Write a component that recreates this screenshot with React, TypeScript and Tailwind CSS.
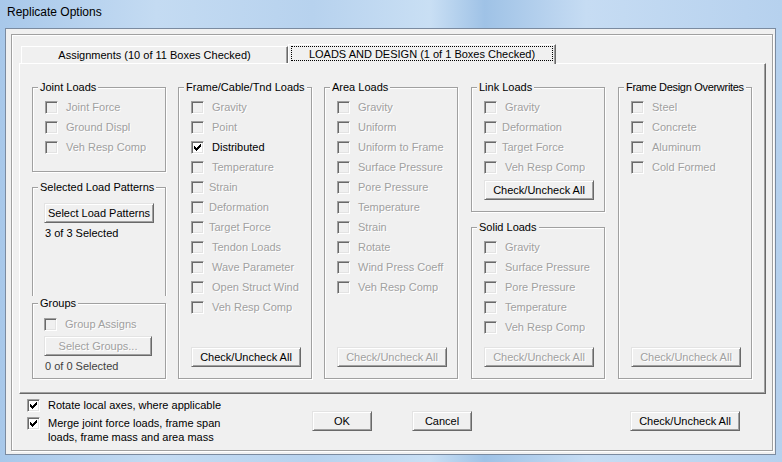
import React from 'react';

/* ─── Types ─── */

interface Item {
  label: string;
  checked?: boolean;
  enabled?: boolean;
  narrow?: boolean;
}

/* ─── Data ─── */

const jointLoads: Item[] = [{ label: 'Joint Force' }, { label: 'Ground Displ' }, { label: 'Veh Resp Comp' }];

const frameLoads: Item[] = [
  { label: 'Gravity' },
  { label: 'Point' },
  { label: 'Distributed', checked: true, enabled: true },
  { label: 'Temperature' },
  { label: 'Strain', narrow: true },
  { label: 'Deformation', narrow: true },
  { label: 'Target Force', narrow: true },
  { label: 'Tendon Loads' },
  { label: 'Wave Parameter' },
  { label: 'Open Struct Wind' },
  { label: 'Veh Resp Comp' },
];

const areaLoads: Item[] = [
  { label: 'Gravity' },
  { label: 'Uniform' },
  { label: 'Uniform to Frame' },
  { label: 'Surface Pressure' },
  { label: 'Pore Pressure' },
  { label: 'Temperature' },
  { label: 'Strain' },
  { label: 'Rotate' },
  { label: 'Wind Press Coeff' },
  { label: 'Veh Resp Comp' },
];

const linkLoads: Item[] = [
  { label: 'Gravity' },
  { label: 'Deformation', narrow: true },
  { label: 'Target Force', narrow: true },
  { label: 'Veh Resp Comp' },
];

const solidLoads: Item[] = [
  { label: 'Gravity' },
  { label: 'Surface Pressure' },
  { label: 'Pore Pressure' },
  { label: 'Temperature' },
  { label: 'Veh Resp Comp' },
];

const designOverwrites: Item[] = [{ label: 'Steel' }, { label: 'Concrete' }, { label: 'Aluminum' }, { label: 'Cold Formed' }];

const DISABLED_TEXT = 'text-[#a0a0a0] [text-shadow:1px_1px_0_#fff]';

/* ─── Pieces ─── */

function CheckMark() {
  return (
    <svg width="11" height="11" viewBox="0 0 11 11" shapeRendering="crispEdges" className="block">
      <path d="M8 2h1v1H8zM7 3h2v1H7zM2 4h1v1H2zM6 4h3v1H6zM2 5h2v1H2zM5 5h3v1H5zM2 6h5v1H2zM3 7h3v1H3zM4 8h1v1H4z" fill="#000" />
    </svg>
  );
}

function Box({ checked, disabled }: { checked?: boolean; disabled?: boolean }) {
  return (
    <span
      className={`block w-[13px] h-[13px] shrink-0 border border-t-[#a0a0a0] border-l-[#a0a0a0] border-r-white border-b-white shadow-[inset_1px_1px_0_#696969,inset_-1px_-1px_0_#e3e3e3] ${
        disabled ? 'bg-[#f0f0f0]' : 'bg-white'
      }`}
    >
      {checked && <CheckMark />}
    </span>
  );
}

function CheckRow({ item }: { item: Item }) {
  return (
    <div className="flex items-center h-[20px]">
      <Box checked={item.checked} disabled={!item.enabled} />
      <span
        className={`${item.narrow ? 'ml-[5px]' : 'ml-[8px]'} ${
          item.enabled ? 'text-black' : DISABLED_TEXT
        } leading-[14px] whitespace-nowrap`}
      >
        {item.label}
      </span>
    </div>
  );
}

function Button({ label, disabled, className = '' }: { label: string; disabled?: boolean; className?: string }) {
  return (
    <div
      className={`h-[20px] shrink-0 flex items-center justify-center bg-[#f0f0f0] border border-t-[#e3e3e3] border-l-[#e3e3e3] border-r-[#696969] border-b-[#696969] shadow-[inset_1px_1px_0_#fff,inset_-1px_-1px_0_#a0a0a0] leading-[14px] whitespace-nowrap ${
        disabled ? DISABLED_TEXT : 'text-black'
      } ${className}`}
    >
      {label}
    </div>
  );
}

function Group({
  title,
  className = '',
  bodyClass = '',
  legendClass = '',
  openBottom,
  children,
}: {
  title: string;
  className?: string;
  bodyClass?: string;
  legendClass?: string;
  openBottom?: boolean;
  children: React.ReactNode;
}) {
  return (
    <fieldset
      className={`min-w-0 w-[134px] border border-[#a0a0a0] ${
        openBottom
          ? 'border-b-0 shadow-[inset_1px_1px_0_#fff,1px_0_0_#fff]'
          : 'shadow-[inset_1px_1px_0_#fff,1px_1px_0_#fff]'
      } ${className}`}
    >
      <legend className={`ml-[5px] px-[2px] leading-[14px] text-black bg-[#f0f0f0] whitespace-nowrap ${legendClass}`}>
        {title}
      </legend>
      <div className={`flex flex-col ${bodyClass}`}>{children}</div>
    </fieldset>
  );
}

function ListGroup({
  title,
  items,
  button,
  gap,
  className = '',
  legendClass = '',
}: {
  title: string;
  items: Item[];
  button?: boolean;
  gap: string;
  className?: string;
  legendClass?: string;
}) {
  return (
    <Group title={title} className={className} legendClass={legendClass} bodyClass="pl-[12px] pt-[3px]">
      {items.map((it) => (
        <CheckRow key={it.label} item={it} />
      ))}
      <Button label="Check/Uncheck All" disabled={!button} className={`w-[110px] ${gap}`} />
    </Group>
  );
}

/* ─── Dialog ─── */

export default function App() {
  return (
    <div className="w-[782px] h-[462px] overflow-hidden flex flex-col font-['Liberation_Sans',Arial,sans-serif] text-[11px] bg-[linear-gradient(90deg,#a8c8ea_0%,#c4dbf2_20%,#b7d2ee_40%,#c9dff4_55%,#9fc2e6_62%,#c6dcf3_75%,#b6d1ee_100%)]">
      {/* title bar */}
      <div className="h-[28px] shrink-0 pl-[7px] pt-[5px] text-[12px] leading-[14px] text-black">Replicate Options</div>

      {/* client area */}
      <div className="ml-[5px] w-[771px] h-[427px] border border-[#7b8ba0] bg-[#f0f0f0] pl-[5px] pt-[5px]">
        <div className="w-[762px] h-[417px] border border-[#a0a0a0] shadow-[inset_1px_1px_0_#fff,1px_1px_0_#fff] flex flex-col">
          <div className="pl-[7px] pt-[9px]">
            {/* tabs */}
            <div className="h-[19px] flex items-end">
              <div className="ml-[2px] w-[267px] h-[17px] border-t border-l border-r border-t-white border-l-white border-r-[#696969] shadow-[inset_-1px_0_0_#a0a0a0] flex items-center justify-center leading-[14px] text-black">
                Assignments (10 of 11 Boxes Checked)
              </div>
              <div className="relative z-10 w-[268px] h-[20px] mb-[-1px] bg-[#f0f0f0] border-t border-l border-r border-t-white border-l-white border-r-[#696969] shadow-[inset_-1px_0_0_#a0a0a0] pl-[2px] pr-[2px] pt-[1px] pb-[3px]">
                <div className="h-full border border-dotted border-black flex items-center justify-center leading-[14px] text-black">
                  LOADS AND DESIGN (1 of 1 Boxes Checked)
                </div>
              </div>
            </div>

            {/* tab panel */}
            <div className="w-[747px] h-[331px] border border-t-white border-l-white border-r-[#696969] border-b-[#696969] shadow-[inset_-1px_-1px_0_#a0a0a0] flex items-start gap-[12px] pl-[12px] pt-[16px]">
              <div className="w-[134px] flex flex-col">
                <Group title="Joint Loads" className="h-[92px]" bodyClass="pl-[12px] pt-[3px]">
                  {jointLoads.map((it) => (
                    <CheckRow key={it.label} item={it} />
                  ))}
                </Group>
                <Group title="Selected Load Patterns" openBottom className="mt-[8px] h-[116px]" bodyClass="pl-[11px] pt-[9px]">
                  <Button label="Select Load Patterns" className="w-[110px]" />
                  <div className="mt-[3px] ml-[1px] leading-[14px] text-black">3 of 3 Selected</div>
                </Group>
                <Group title="Groups" className="h-[83px]" bodyClass="pl-[11px] pt-[4px]">
                  <CheckRow item={{ label: 'Group Assigns' }} />
                  <Button label="Select Groups..." disabled className="w-[108px] mt-[2px]" />
                  <div className="mt-[3px] ml-[1px] leading-[14px] text-[#404040]">0 of 0 Selected</div>
                </Group>
              </div>

              <ListGroup title="Frame/Cable/Tnd Loads" items={frameLoads} button gap="mt-[30px]" className="h-[299px]" />
              <ListGroup title="Area Loads" items={areaLoads} gap="mt-[50px]" className="h-[299px]" />

              <div className="ml-[1px] w-[134px] flex flex-col">
                <Group title="Link Loads" className="h-[132px]" bodyClass="pl-[12px] pt-[3px]">
                  {linkLoads.map((it) => (
                    <CheckRow key={it.label} item={it} />
                  ))}
                  <Button label="Check/Uncheck All" className="w-[110px] mt-[3px]" />
                </Group>
                <ListGroup title="Solid Loads" items={solidLoads} gap="mt-[10px]" className="mt-[8px] h-[159px]" />
              </div>

              <ListGroup
                title="Frame Design Overwrites"
                items={designOverwrites}
                gap="mt-[170px]"
                className="ml-[1px] h-[299px]"
                legendClass="tracking-[-0.3px]"
              />
            </div>
          </div>

          {/* bottom options */}
          <div className="flex items-start pl-[15px]">
            <div className="w-[285px] pt-[4px]">
              <div className="flex items-center h-[14px]">
                <Box checked />
                <span className="ml-[8px] leading-[14px] text-black whitespace-nowrap">Rotate local axes, where applicable</span>
              </div>
              <div className="flex items-start mt-[4px]">
                <span className="mt-[1px]">
                  <Box checked />
                </span>
                <span className="ml-[8px] leading-[14px] text-black whitespace-nowrap">
                  Merge joint force loads, frame span
                  <br />
                  loads, frame mass and area mass
                </span>
              </div>
            </div>
            <Button label="OK" className="w-[60px] mt-[17px]" />
            <Button label="Cancel" className="w-[60px] mt-[17px] ml-[40px]" />
            <Button label="Check/Uncheck All" className="w-[110px] mt-[17px] ml-[158px]" />
          </div>
        </div>
      </div>
    </div>
  );
}
